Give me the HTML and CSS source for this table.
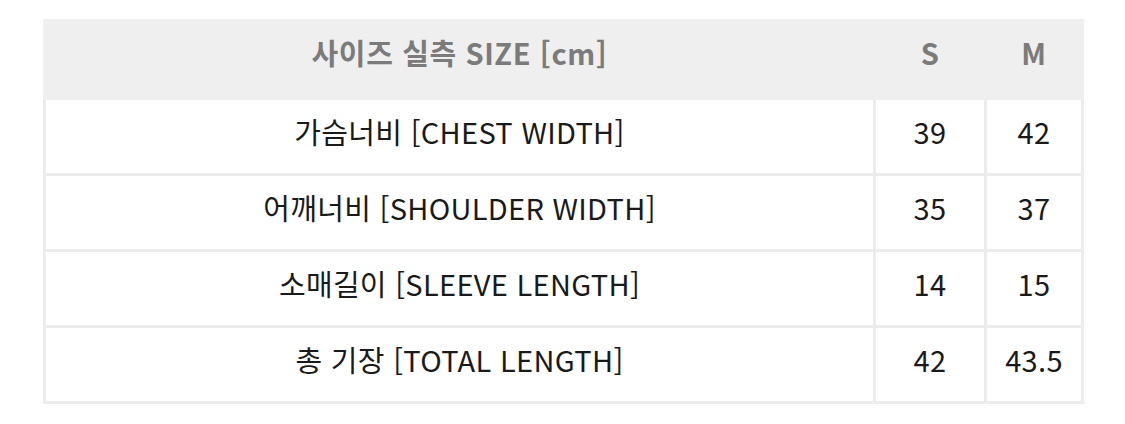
FILE: index.html
```html
<!DOCTYPE html>
<html lang="ko">
<head>
<meta charset="utf-8">
<link rel="stylesheet" href="styles.css">
</head>
<body>
<div class="page">
<table class="size-table">
  <colgroup>
    <col class="c-name">
    <col class="c-s">
    <col class="c-m">
  </colgroup>
  <thead>
    <tr>
      <th>사이즈 실측 SIZE [cm]</th>
      <th>S</th>
      <th>M</th>
    </tr>
  </thead>
  <tbody>
    <tr><td>가슴너비 [CHEST WIDTH]</td><td>39</td><td>42</td></tr>
    <tr><td>어깨너비 [SHOULDER WIDTH]</td><td>35</td><td>37</td></tr>
    <tr><td>소매길이 [SLEEVE LENGTH]</td><td>14</td><td>15</td></tr>
    <tr><td>총 기장 [TOTAL LENGTH]</td><td>42</td><td>43.5</td></tr>
  </tbody>
</table>
</div>
</body>
</html>
```

FILE: styles.css
```css
html, body {
  margin: 0;
  padding: 0;
  background: #ffffff;
}
.page {
  padding: 19px 0 0 43px;
}
.size-table {
  width: 1038px;
  border-collapse: collapse;
  table-layout: fixed;
  font-family: "Noto Sans CJK KR", "Noto Sans", sans-serif;
  font-size: 29px;
  letter-spacing: 0.3px;
  border: 3px solid #ececec;
}
.c-name { width: 830px; }
.c-s { width: 111px; }
.c-m { width: 97px; }
.size-table th {
  height: 78px;
  box-sizing: border-box;
  background: #efefef;
  color: #7b7b7b;
  font-weight: 700;
  letter-spacing: 0.6px;
  text-align: center;
  padding: 0 0 16px 0;
  border: 3px solid #efefef;
}
.size-table td {
  height: 76px;
  box-sizing: border-box;
  color: #1a1a1a;
  text-align: center;
  padding: 0 0 12px 0;
  border: 3px solid #ececec;
}
```
